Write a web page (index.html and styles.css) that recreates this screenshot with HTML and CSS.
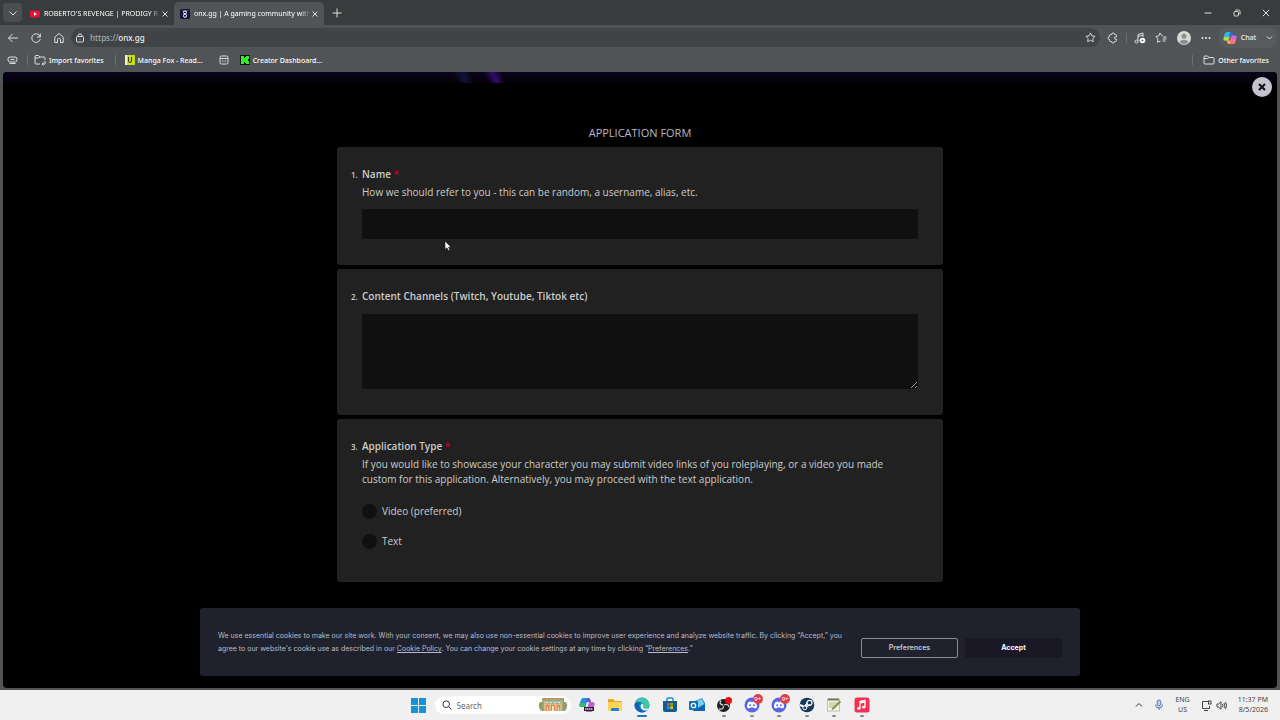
FILE: index.html
```html
<!DOCTYPE html>
<html lang="en">
<head>
    <meta charset="UTF-8">
    <meta name="viewport" content="width=device-width, initial-scale=1.0">
    <title>onx.gg | A gaming community</title>
    <link rel="stylesheet" href="styles.css">
</head>
<body>

    <header class="browser">
        <div class="tab-bar">
            <button class="tab-menu" aria-label="Tab actions"><svg width="10" height="10" viewBox="0 0 10 10"><path d="M1.500 3.500 5 7l3.500-3.500"/></svg></button>
            <div class="tab">
                <svg class="favicon" width="10" height="10" viewBox="0 0 10 10"><rect y="1.500" width="10" height="7" rx="2" fill="#e8113c" stroke="none"/><path d="M4 3.300v3.400L6.800 5z" fill="#fff" stroke="none"/></svg>
                <span class="tab-title">ROBERTO'S REVENGE | PRODIGY R</span>
                <button class="tab-close" aria-label="Close tab"><svg width="8" height="8" viewBox="0 0 8 8"><path d="M1.500 1.500l5 5M6.500 1.500l-5 5"/></svg></button>
            </div>
            <div class="tab active">
                <svg class="favicon" width="10" height="10" viewBox="0 0 10 10"><rect width="10" height="10" rx="1.500" fill="#15123f" stroke="none"/><circle cx="5" cy="3.400" r="1.500" stroke="#fff"/><circle cx="5" cy="6.700" r="1.600" stroke="#fff"/><path d="M3 1.500l1 1M7 1.500l-1 1" stroke="#fff"/></svg>
                <span class="tab-title">onx.gg | A gaming community with</span>
                <button class="tab-close" aria-label="Close tab"><svg width="8" height="8" viewBox="0 0 8 8"><path d="M1.500 1.500l5 5M6.500 1.500l-5 5"/></svg></button>
            </div>
            <button class="new-tab" aria-label="New tab"><svg width="10" height="10" viewBox="0 0 10 10"><path d="M5 .5v9M.5 5h9"/></svg></button>
            <div class="window-buttons">
                <button aria-label="Minimize"><svg width="8" height="8" viewBox="0 0 8 8"><path d="M.5 4h7"/></svg></button>
                <button aria-label="Restore"><svg width="8" height="8" viewBox="0 0 8 8"><rect x="1" y="2.500" width="4.500" height="4.500" rx="1"/><path d="M2.500 1h3A1.500 1.500 0 0 1 7 2.500v3"/></svg></button>
                <button aria-label="Close"><svg width="8" height="8" viewBox="0 0 8 8"><path d="M.8.8l6.400 6.400M7.200.8.8 7.200"/></svg></button>
            </div>
        </div>

        <div class="toolbar">
            <button aria-label="Back"><svg width="12" height="12" viewBox="0 0 12 12"><path d="M11 6H1.500M5.500 2l-4 4 4 4"/></svg></button>
            <button aria-label="Refresh"><svg width="12" height="12" viewBox="0 0 12 12"><path d="M10.300 5.200A4.300 4.300 0 1 0 10.300 7M10.300 1.500v3.500H7"/></svg></button>
            <button aria-label="Home"><svg width="12" height="12" viewBox="0 0 12 12"><path d="M1.800 5.200 6 1.500l4.200 3.700v5.300H7.500V7.500a1 1 0 0 0-1-1h-1a1 1 0 0 0-1 1v3H1.800z"/></svg></button>
            <div class="address">
                <svg width="10" height="10" viewBox="0 0 10 10"><rect x="1.500" y="3.500" width="7" height="5.500" rx="1"/><path d="M3 3.500V2.800a2 2 0 0 1 4 0v.7M5 5.800v.8"/></svg>
                <span class="url"><span class="scheme">https://</span>onx.gg</span>
                <button class="star" aria-label="Add to favorites"><svg width="11" height="11" viewBox="0 0 12 12"><path d="M6 1l1.500 3.200 3.500.5-2.500 2.400.6 3.500L6 9l-3.100 1.600.6-3.500L1 4.700l3.500-.5z"/></svg></button>
            </div>
            <div class="tools">
                <button aria-label="Extensions"><svg width="12" height="12" viewBox="0 0 12 12"><path d="M3.500 2.500h1a1.500 1.500 0 0 1 3 0h1q1 0 1 1v1.200H9a1.300 1.300 0 0 0 0 2.600h.5v1.200q0 1-1 1h-1a1.500 1.500 0 0 1-3 0h-1q-1 0-1-1V7.500a1.500 1.500 0 0 1 0-3v-1q0-1 1-1z"/></svg></button>
                <i class="divider"></i>
                <button aria-label="Media"><svg width="12" height="12" viewBox="0 0 12 12"><path d="M4 9.500v-7L9 1v4M4 4.500l5-1.500"/><circle cx="2.500" cy="9.500" r="1.500"/><circle cx="8.500" cy="8.500" r="2.800" fill="#fff" stroke="none"/><path d="M7.800 7.300v2.400l1.900-1.200z" fill="#444" stroke="none"/></svg></button>
                <button aria-label="Favorites"><svg width="12" height="12" viewBox="0 0 12 12"><path d="M7.300 4.200 5 1 3.700 4 1 4.500l2 2.500-.5 3.300L5.500 9M8 5h3.500M7.500 7h4M7.500 9h3"/></svg></button>
                <button aria-label="Profile"><svg width="14" height="14" viewBox="0 0 14 14"><circle cx="7" cy="7" r="7" fill="#d8d8d6" stroke="none"/><circle cx="7" cy="5.300" r="2.500" fill="#8e8e8e" stroke="none"/><path d="M2.600 11.500a4.500 3.500 0 0 1 8.800 0 7 7 0 0 1-8.800 0z" fill="#8e8e8e" stroke="none"/></svg></button>
                <button aria-label="Settings"><svg width="10" height="10" viewBox="0 0 10 10"><g fill="#eee" stroke="none"><circle cx="1.500" cy="5" r="1"/><circle cx="5" cy="5" r="1"/><circle cx="8.500" cy="5" r="1"/></g></svg></button>
            </div>
            <button class="chat">
                <svg width="14" height="14" viewBox="0 0 14 14"><g stroke="none"><path d="M4 1h4L5.500 9.500H2C0 9.500 0 7.500 1 5l1-2.500Q2.500 1 4 1z" fill="#31b8e8"/><path d="M1 6h5.500l-1 3.500H2C.5 9.500.3 8 1 6z" fill="#b8d83b"/><path d="M7 1h1.500q1.200 0 1.700 2l.4 1.500H6z" fill="#2768df"/><path d="M8.500 4.500H12c2 0 2 2 1 4.500l-1 2.500q-.5 1.500-2 1.500H6z" fill="#c767e4"/><path d="M7.500 8.500H13l-1 3q-.5 1.500-2 1.500H6z" fill="#ff7869"/><path d="M3.500 9.500h4L6.500 13q-1.700 0-2.200-1.500z" fill="#ffae45"/></g></svg>
                Chat
                <svg class="chat-arrow" width="7" height="7" viewBox="0 0 7 7"><path d="M1 2.500l2.500 2.500L6 2.500"/></svg>
            </button>
        </div>

        <nav class="bookmarks">
            <svg width="11" height="10" viewBox="0 0 11 10"><rect x="1" y="2" width="9" height="5" rx="2"/><path d="M3.500 4.500h4M2.500 8.500h6"/></svg>
            <i class="divider"></i>
            <a href="#" class="import"><svg width="12" height="12" viewBox="0 0 12 12"><path d="M6 10H2a1 1 0 0 1-1-1V2.500a1 1 0 0 1 1-1h2.500L6 3h4a1 1 0 0 1 1 1v2M1 4h3.500L6 3M11 7v3H8.500M9.500 8.500 8 10l1.500 1.500"/></svg>Import favorites</a>
            <i class="divider"></i>
            <a href="#" class="manga"><svg width="10" height="10" viewBox="0 0 10 10"><rect width="10" height="10" fill="#c8dc20" stroke="none"/><path d="M0 0h2v10H0z" fill="#f3f3b4" stroke="none"/><path d="M3.500 2v4q0 1.500 1.500 1.500T6.500 6V2" stroke="#383c12"/></svg>Manga Fox - Read...</a>
            <a href="#" class="page-link" aria-label="Saved page"><svg width="10" height="10" viewBox="0 0 10 10"><rect x="1" y="1" width="8" height="8" rx="1.500"/><path d="M1 3.500h8M3 6h1M4.500 6h1M6 6h1"/></svg></a>
            <a href="#" class="creator"><svg width="10" height="10" viewBox="0 0 10 10"><rect width="10" height="10" rx="1" fill="#06150a" stroke="none"/><path d="M1 1h3v2h1V2h1V1h3v3H8v2h1v3H6V8H5V7H4v2H1z" fill="#35ed23" stroke="none"/></svg>Creator Dashboard...</a>
            <i class="divider other-divider"></i>
            <a href="#" class="other"><svg width="12" height="12" viewBox="0 0 12 12"><path d="M1 9V3a1 1 0 0 1 1-1h2.500L6 3.500h4a1 1 0 0 1 1 1V9a1 1 0 0 1-1 1H2a1 1 0 0 1-1-1zM1 4.500h3.500L6 3.500"/></svg>Other favorites</a>
        </nav>
    </header>

    <main class="page">
        <div class="hero-strip"></div>
        <button class="close-form" aria-label="Close form"><svg width="8" height="8" viewBox="0 0 8 8"><path d="M1 1l6 6M7 1 1 7"/></svg></button>

        <form class="form">
            <h1>APPLICATION FORM</h1>

            <section class="card">
                <span class="number">1.</span>
                <div class="question">
                    <label class="title" for="name">Name <span class="required">*</span></label>
                    <p class="hint">How we should refer to you - this can be random, a username, alias, etc.</p>
                    <input class="field" type="text" id="name">
                </div>
            </section>

            <section class="card">
                <span class="number">2.</span>
                <div class="question">
                    <label class="title" for="channels">Content Channels (Twitch, Youtube, Tiktok etc)</label>
                    <textarea class="field" id="channels"></textarea>
                </div>
            </section>

            <section class="card">
                <span class="number">3.</span>
                <fieldset class="question">
                    <legend class="title">Application Type <span class="required">*</span></legend>
                    <p class="hint">If you would like to showcase your character you may submit video links of you roleplaying, or a video you made custom for this application. Alternatively, you may proceed with the text application.</p>
                    <div class="choices">
                        <label><input type="radio" name="type" value="video">Video (preferred)</label>
                        <label><input type="radio" name="type" value="text">Text</label>
                    </div>
                </fieldset>
            </section>
        </form>

        <aside class="cookies">
            <p>We use essential cookies to make our site work. With your consent, we may also use non-essential cookies to improve user experience and analyze website traffic. By clicking “Accept,” you agree to our website's cookie use as described in our <a href="#">Cookie Policy</a>. You can change your cookie settings at any time by clicking “<a href="#">Preferences</a>.”</p>
            <button class="preferences">Preferences</button>
            <button class="accept">Accept</button>
        </aside>

        <svg class="cursor" width="8" height="12" viewBox="0 0 8 12"><path d="M1 1v8.500l2-1.800 1.300 3 1.500-.7-1.300-2.800H7z" fill="#fff" stroke="#111" stroke-width=".6"/></svg>
    </main>

    <footer class="taskbar">
        <div class="apps">
            <button class="start" aria-label="Start"><svg width="15" height="15" viewBox="0 0 15 15"><path d="M0 0h7v7H0zM8 0h7v7H8zM0 8h7v7H0zM8 8h7v7H8z" fill="#1593d6"/></svg></button>
            <label class="search">
                <svg width="10" height="10" viewBox="0 0 10 10" fill="none" stroke="#333"><circle cx="4.200" cy="4.200" r="3.300"/><path d="M6.700 6.700 9.500 9.500"/></svg>
                <input type="text" placeholder="Search" aria-label="Search">
                <svg width="30" height="16" viewBox="0 0 30 16"><path d="M4 2h22v12H4z" fill="#94ad8a"/><path d="M4 1h22v2H4z" fill="#b99a60"/><path d="M6 4h18v10H6z" fill="#d9b98a"/><path d="M7 4h16v3H7z" fill="#a8b6a0"/><path d="M8 5h2v1H8zM12 5h2v1h-2zM16 5h2v1h-2zM20 5h2v1h-2z" fill="#f1ecd0"/><path d="M8 8h3v6H8zM13 8h4v6h-4zM19 8h3v6h-3z" fill="#df8a50"/><path d="M9 10h1v4H9zM14 9h2v5h-2zM20 10h1v4h-1z" fill="#f1dfc4"/><path d="M2 5q-3 4 1 9h2V5zM28 5q3 4-1 9h-2V5z" fill="#88a66f"/><path d="M3 6v6M27 6v6" stroke="#d9794e"/></svg>
            </label>
            <nav class="pinned">
                <button aria-label="Copilot"><svg width="16" height="16" viewBox="0 0 16 16"><path d="M4 1h5L6.500 10H3C0 10 0 8 1 5.500L2 3q.5-2 2-2z" fill="#2291e3"/><path d="M1 6h6l-1 4H3C.5 10 0 8.500 1 6z" fill="#35b875"/><path d="M8 1h1.500Q11 1 11.500 3l.5 2H7z" fill="#6c51d8"/><path d="M10 5h3c3 0 3 2 2 4.500L14 13q-.5 2-2 2H7z" fill="#c75bd8"/><path d="M5 10h10v4H5z" fill="#222"/><path d="M6 12h8" stroke="#ddd" stroke-width="1.500" stroke-dasharray="1.500 .5"/></svg></button>
                <button aria-label="File Explorer"><svg width="16" height="16" viewBox="0 0 16 16"><path d="M1 3q0-1 1-1h4l2 2h6q1 0 1 1v8H1z" fill="#e9a91c"/><rect x="1" y="5" width="14" height="9" rx="1" fill="#ffd45b"/><path d="M4 12q0-1 1-1h6q1 0 1 1v2H4z" fill="#2680c9"/></svg></button>
                <button class="open current" aria-label="Edge"><svg width="16" height="16" viewBox="0 0 16 16"><circle cx="8" cy="8" r="7.500" fill="#1687d4"/><path d="M.6 7A7.500 7.500 0 0 1 15.500 8c0 3-3.500 4-6 2.500 1-1 1-4-2-5S1.500 5.500.6 7z" fill="#43c9a1"/><path d="M.5 8C1 5 5 4 7.500 6 5 6 4.500 9 6 11.500S10.500 15 13 13.500A7.500 7.500 0 0 1 .5 8z" fill="#1262b3"/><path d="M8 6.500c2 1 2 3 1 4 1.500 1.500 4 1.300 6 .2Q13.500 14 11 13.500C6.500 13 5.500 8.500 8 6.500z" fill="#e9f6f7"/></svg></button>
                <button aria-label="Microsoft Store"><svg width="16" height="16" viewBox="0 0 16 16"><path d="M5 4V2q0-1 1-1h4q1 0 1 1v2" fill="none" stroke="#298bc9" stroke-width="1.500"/><path d="M1 4h14v9q0 2-2 2H3q-2 0-2-2z" fill="#145b91"/><path d="M5 6h2.700v2.700H5z" fill="#f25022"/><path d="M8.300 6H11v2.700H8.300z" fill="#7fba00"/><path d="M5 9.300h2.700V12H5z" fill="#00a4ef"/><path d="M8.300 9.300H11V12H8.300z" fill="#ffb900"/></svg></button>
                <button aria-label="Outlook"><svg width="16" height="16" viewBox="0 0 16 16"><path d="M4 5 13 1l3 5v8H4z" fill="#238bd7"/><path d="M5 5l8-3 2 5-6 4-4-3z" fill="#71d4f5"/><path d="M4 14 16 7v6q0 1-1 1z" fill="#155fb5"/><rect y="4" width="9" height="9" rx="1" fill="#0e70bd"/><circle cx="4.500" cy="8.500" r="2.200" fill="none" stroke="#fff" stroke-width="1.300"/></svg></button>
                <button class="open" aria-label="OBS Studio"><svg width="16" height="16" viewBox="0 0 16 16"><circle cx="7.500" cy="8.500" r="6.500" fill="#1f1f22"/><path d="M7 8Q2.500 7 5 3.500M8 8q4-2 5 2M7.500 9q0 4-4.500 3" fill="none" stroke="#ccc" stroke-width="1.300"/><circle cx="12.500" cy="3.500" r="3.500" fill="#e80d12"/></svg></button>
                <button class="open" aria-label="Discord"><svg width="16" height="16" viewBox="0 0 16 16"><circle cx="8" cy="8" r="7.500" fill="#5865e2"/><path d="M4 5.500Q5.500 4.500 7 4.500l.5.700h1L9 4.500q1.500 0 3 1 1.300 3 1 5-1.500 1-2.500 1l-.7-1H6.200l-.7 1q-1 0-2.500-1-.3-2 1-5z" fill="#fff"/><circle cx="6.200" cy="8.200" r="1" fill="#5865e2"/><circle cx="9.800" cy="8.200" r="1" fill="#5865e2"/></svg><span class="badge">9+</span></button>
                <button class="open" aria-label="Discord"><svg width="16" height="16" viewBox="0 0 16 16"><circle cx="8" cy="8" r="7.500" fill="#5865e2"/><path d="M4 5.500Q5.500 4.500 7 4.500l.5.700h1L9 4.500q1.500 0 3 1 1.300 3 1 5-1.500 1-2.500 1l-.7-1H6.200l-.7 1q-1 0-2.500-1-.3-2 1-5z" fill="#fff"/><circle cx="6.200" cy="8.200" r="1" fill="#5865e2"/><circle cx="9.800" cy="8.200" r="1" fill="#5865e2"/></svg><span class="badge">9+</span></button>
                <button class="open" aria-label="Steam"><svg width="16" height="16" viewBox="0 0 16 16"><circle cx="8" cy="8" r="7.300" fill="#15395b"/><path d="M1 8l4.500 2 3-4" stroke="#fff" stroke-width="2" fill="none"/><circle cx="10.500" cy="5.800" r="2.500" fill="#15395b" stroke="#fff" stroke-width="1.200"/><circle cx="5.800" cy="10.800" r="1.900" fill="#15395b" stroke="#fff"/><path d="M7.500 10 11 7.500" stroke="#fff" stroke-width="1.500"/></svg></button>
                <button class="open" aria-label="Notepad++"><svg width="16" height="16" viewBox="0 0 16 16"><rect x="1.500" y="2" width="12" height="12" fill="#f2f2df" stroke="#aaa" stroke-width=".7"/><path d="M2 1.500h11v2H2z" fill="#77766c"/><path d="M3 6h8M3 8h6M3 10h5" stroke="#b4bc8e"/><path d="M7 10.500 13.500 4l1.200 1.200L8 11.800l-2 .5z" fill="#8fb42d" stroke="#555" stroke-width=".5"/></svg></button>
                <button class="open" aria-label="Apple Music"><svg width="16" height="16" viewBox="0 0 16 16"><rect x=".5" y=".5" width="15" height="15" rx="2.500" fill="#f92f50"/><path d="M6 11V4.500l5-1.200v6.500M6 6l5-1.200" fill="none" stroke="#fff" stroke-width="1.300"/><ellipse cx="4.800" cy="11.300" rx="1.800" ry="1.400" fill="#fff"/><ellipse cx="9.800" cy="10.100" rx="1.800" ry="1.400" fill="#fff"/></svg></button>
            </nav>
        </div>
        <div class="tray">
            <svg width="8" height="8" viewBox="0 0 8 8" stroke="#333"><path d="M1 5.500l3-3 3 3"/></svg>
            <svg width="10" height="12" viewBox="0 0 10 12" stroke="#5579ad"><rect x="3.200" y="1" width="3.600" height="6" rx="1.800" fill="#bdd0ec"/><path d="M1.500 5.500a3.500 3.500 0 0 0 7 0M5 9v2"/></svg>
            <span class="language">ENG<br>US</span>
            <span class="system">
                <svg width="11" height="11" viewBox="0 0 11 11" stroke="#444"><path d="M7 1.500H1.500v7h7V6M3 10.500h4"/><rect x="7.500" y="1" width="2.500" height="3"/></svg>
                <svg width="11" height="11" viewBox="0 0 11 11" stroke="#444"><path d="M1 4h1.500L5 1.800v7.400L2.500 7H1zM6.500 4q1 1.500 0 3M8 2.800q1.800 2.700 0 5.400M9.500 1.800q2.200 3.700 0 7.400"/></svg>
            </span>
            <span class="clock">11:37 PM<br>8/5/2026</span>
        </div>
    </footer>

</body>
</html>
```
FILE: styles.css
```css
* {
    box-sizing: border-box;
}
body {
    margin: 0;
    height: 100vh;
    display: flex;
    flex-direction: column;
    overflow: hidden;
    background: #505456;
    font-family: "Open Sans", "Noto Sans", sans-serif;
    font-size: 10px;
    color: #eee;
}
button {
    margin: 0;
    padding: 0;
    border: 0;
    background: none;
    color: inherit;
    font: inherit;
    display: flex;
    align-items: center;
    justify-content: center;
}
a {
    color: inherit;
}
svg {
    display: block;
    flex: none;
}
.browser svg {
    fill: none;
    stroke: #ddd;
}

/* browser tabs */
.browser {
    font-family: "Noto Sans", sans-serif;
    font-size: 7px;
    font-weight: 500;
}
.tab-bar {
    display: flex;
    align-items: center;
    height: 25px;
    background: #383c3d;
}
.tab-menu {
    width: 19px;
    height: 19px;
    margin: 0 2px 0 3px;
    border-radius: 4px;
    background: #4a4e50;
}
.tab {
    display: flex;
    align-items: center;
    gap: 4px;
    width: 150px;
    height: 23px;
    padding: 0 5px 0 6px;
    align-self: flex-end;
}
.tab.active {
    background: #505456;
    border-radius: 5px 5px 0 0;
}
.tab-title {
    flex: 1;
    overflow: hidden;
    white-space: nowrap;
    color: #fff;
    font-weight: 400;
    margin-right: -3px;
    mask-image: linear-gradient(to right, #000 92%, transparent);
}
.new-tab {
    width: 26px;
    height: 22px;
}
.window-buttons {
    display: flex;
    margin-left: auto;
}
.window-buttons button {
    width: 29px;
    height: 25px;
}

/* address bar */
.toolbar {
    display: flex;
    align-items: center;
    height: 25px;
    padding: 0 3px 0 1px;
}
.toolbar > button {
    width: 23px;
    height: 20px;
}
.address {
    flex: 1;
    display: flex;
    align-items: center;
    gap: 5px;
    height: 19px;
    margin-left: 1px;
    padding: 0 4px;
    border-radius: 10px;
    background: #404446;
    font-size: 8px;
}
.scheme {
    color: #aaa;
}
.star {
    margin-left: auto;
}
.tools {
    display: flex;
    align-items: center;
    justify-content: space-between;
    width: 119px;
    padding: 0 8px 0 7px;
}
.divider {
    width: 1px;
    height: 10px;
    background: #6c7072;
}
.tools .divider {
    margin: 0 -3px;
}
.toolbar .chat {
    width: 58px;
    gap: 4px;
    border-radius: 8px;
    background: #575b5d;
}
.chat-arrow {
    margin-left: 6px;
}

/* bookmarks */
.bookmarks {
    display: flex;
    align-items: center;
    height: 22px;
    padding: 0 11px 2px 7px;
}
.bookmarks a {
    display: flex;
    align-items: center;
    gap: 3px;
    color: #fff;
    text-decoration: none;
}
.import {
    margin: 0 11px 0 6px;
}
.bookmarks .divider {
    margin-left: 9px;
}
.bookmarks .import + .divider {
    margin: 0 9px 0 0;
}
.page-link {
    margin: 0 11px 0 16px;
}
.bookmarks .other-divider {
    margin: 0 10px 0 auto;
}

/* page */
.page {
    position: relative;
    flex: 1;
    margin: 0 3px 2px;
    border-radius: 4px;
    background: #000;
    overflow: hidden;
}
.hero-strip {
    height: 11px;
    background: linear-gradient(65deg, transparent 412px, #11123a 420px, transparent 428px, transparent 440px, #300c68 448px, transparent 456px), linear-gradient(#090419, #05020e 80%, #000);
}
.close-form {
    position: absolute;
    top: 5px;
    right: 5px;
    width: 20px;
    height: 20px;
    border-radius: 50%;
    background: #c5c3ce;
}
.close-form svg {
    stroke: #111;
    stroke-width: 2;
}
.form {
    display: flex;
    flex-direction: column;
    gap: 4px;
    max-width: 606px;
    margin: 0 auto;
    padding-top: 42px;
    color: #ccc;
    font-weight: 500;
}
h1 {
    margin: 0 0 2px;
    font-size: 11px;
    line-height: 16px;
    font-weight: 500;
    text-align: center;
    color: #b9b9c1;
}
.card {
    display: flex;
    padding: 19px 25px 26px 14px;
    border-radius: 3px;
    background: #212121;
}
.number {
    width: 11px;
    font-size: 8px;
    line-height: 18px;
    font-weight: 600;
}
.question {
    flex: 1;
    min-width: 0;
    margin: 0;
    padding: 0;
    border: 0;
}
.title {
    display: block;
    padding: 0;
    line-height: 16px;
    font-weight: 600;
}
.required {
    color: #c4002f;
}
.hint {
    margin: 3px 0 -1px;
    line-height: 15px;
}
.field {
    display: block;
    width: 100%;
    height: 30px;
    margin-top: 10px;
    border: 0;
    border-radius: 2px;
    background: #101010;
    color: #ccc;
    font: inherit;
}
textarea.field {
    height: 75px;
    color-scheme: dark;
}
.choices {
    padding-top: 10px;
}
.choices label {
    display: flex;
    align-items: center;
    gap: 5px;
    height: 30px;
}
.choices input {
    appearance: none;
    width: 15px;
    height: 15px;
    margin: 0;
    border-radius: 50%;
    background: #101010;
}
.choices input:checked {
    border: 4px solid #ccc;
}

/* cookie banner */
.cookies {
    position: absolute;
    left: 0;
    right: 0;
    bottom: 12px;
    display: flex;
    align-items: center;
    width: 880px;
    max-width: 100%;
    height: 68px;
    margin: 0 auto;
    padding: 0 18px;
    border-radius: 3px;
    background: #1f222d;
    font-family: Inter, Roboto, sans-serif;
    font-size: 7px;
    line-height: 13px;
    color: #b9bac5;
}
.cookies p {
    flex: 1;
    margin: 0 8px 0 0;
}
.cookies button {
    width: 97px;
    height: 20px;
    margin: 11px 0 0 7px;
    border-radius: 2px;
    font-weight: 700;
}
.preferences {
    border: 1px solid #8b8d99;
}
.cookies .accept {
    background: #1a1824;
    color: #fff;
}
.cursor {
    position: absolute;
    left: 441px;
    top: 168px;
}

/* taskbar */
.taskbar {
    display: grid;
    grid-template-columns: 1fr auto 1fr;
    height: 30px;
    background: #f0f0f0;
    color: #444;
    font-family: "Noto Sans", sans-serif;
    font-size: 8px;
}
.apps {
    grid-column: 2;
    display: flex;
    align-items: center;
}
.start {
    width: 27px;
}
.search {
    display: flex;
    align-items: center;
    gap: 5px;
    width: 136px;
    height: 18px;
    margin: 0 3px;
    padding: 0 3px 0 7px;
    border-radius: 9px;
    background: #fff;
}
.search input {
    flex: 1;
    min-width: 0;
    padding: 0;
    border: 0;
    background: none;
    font: inherit;
}
.search input::placeholder {
    color: #666;
}
.pinned {
    display: grid;
    grid-template-columns: repeat(11, 1fr);
    width: 302px;
}
.pinned button {
    position: relative;
    height: 30px;
}
.open::after {
    content: "";
    position: absolute;
    bottom: 3px;
    width: 4px;
    height: 2px;
    border-radius: 1px;
    background: #888;
}
.current::after {
    width: 10px;
    background: #1976c9;
}
.badge {
    position: absolute;
    top: 4px;
    right: 3px;
    width: 10px;
    height: 10px;
    border-radius: 50%;
    background: #dc3f4c;
    color: #fff;
    font-size: 6px;
    line-height: 10px;
}
.tray {
    display: flex;
    align-items: center;
    justify-content: flex-end;
    gap: 11px;
    padding-right: 12px;
    line-height: 10px;
    font-size: 7px;
}
.tray svg {
    fill: none;
}
.language {
    text-align: center;
}
.system {
    display: flex;
    gap: 4px;
}
.clock {
    text-align: right;
}
```
